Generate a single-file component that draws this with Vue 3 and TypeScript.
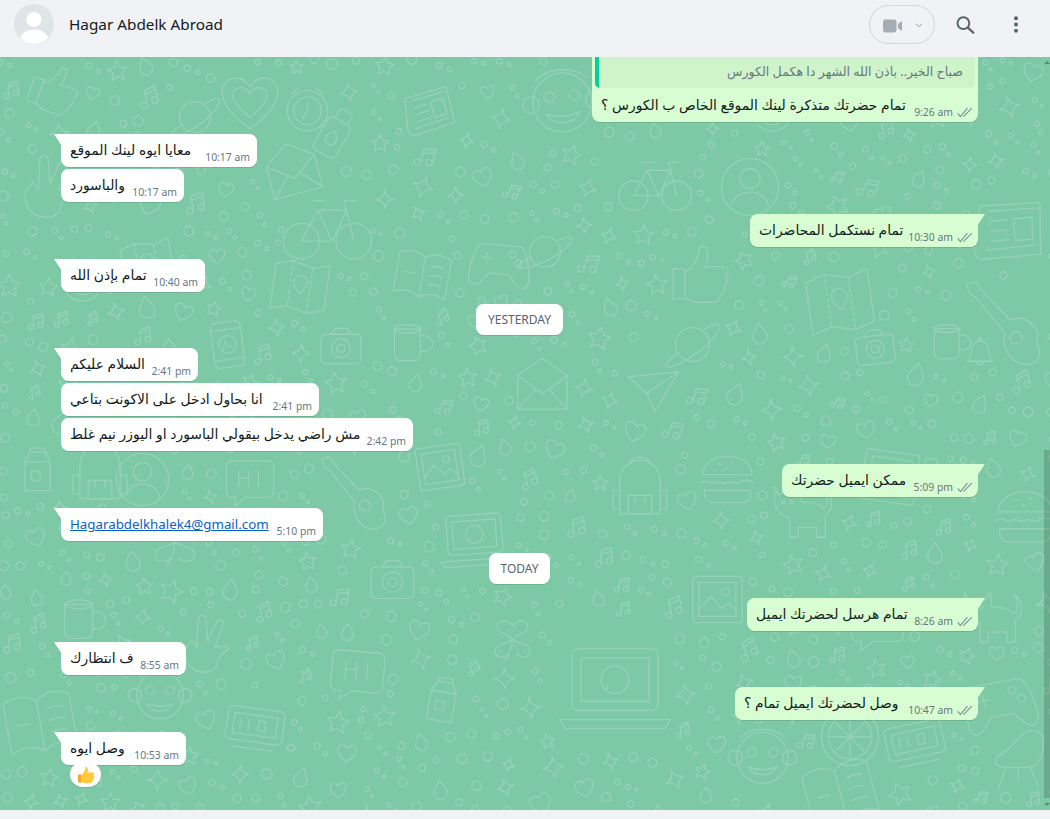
<script setup lang="ts">
interface Msg {
  kind: 'in' | 'out' | 'chip'
  text?: string
  time?: string
  gap: string
  w?: number
  tail?: boolean
  link?: boolean
  quote?: string
  react?: boolean
}

const messages: Msg[] = [
  { kind: 'out', text: 'تمام حضرتك متذكرة لينك الموقع الخاص ب الكورس ؟', time: '9:26 am', gap: 'g0', w: 386, quote: 'صباح الخير.. باذن الله الشهر دا هكمل الكورس' },
  { kind: 'in', text: 'معايا ايوه لينك الموقع', time: '10:17 am', gap: 'g12', w: 196, tail: true },
  { kind: 'in', text: 'والباسورد', time: '10:17 am', gap: 'g2', w: 123 },
  { kind: 'out', text: 'تمام نستكمل المحاضرات', time: '10:30 am', gap: 'g12', w: 228, tail: true },
  { kind: 'in', text: 'تمام بإذن الله', time: '10:40 am', gap: 'g12', w: 144, tail: true },
  { kind: 'chip', text: 'YESTERDAY', gap: 'g12' },
  { kind: 'in', text: 'السلام عليكم', time: '2:41 pm', gap: 'g13', w: 137, tail: true },
  { kind: 'in', text: 'انا بحاول ادخل على الاكونت بتاعي', time: '2:41 pm', gap: 'g2', w: 258 },
  { kind: 'in', text: 'مش راضي يدخل بيقولي الباسورد او اليوزر نيم غلط', time: '2:42 pm', gap: 'g2', w: 352 },
  { kind: 'out', text: 'ممكن ايميل حضرتك', time: '5:09 pm', gap: 'g13', w: 196, tail: true },
  { kind: 'in', text: 'Hagarabdelkhalek4@gmail.com', time: '5:10 pm', gap: 'g11', w: 262, tail: true, link: true },
  { kind: 'chip', text: 'TODAY', gap: 'g12' },
  { kind: 'out', text: 'تمام هرسل لحضرتك ايميل', time: '8:26 am', gap: 'g14', w: 231, tail: true },
  { kind: 'in', text: 'ف انتظارك', time: '8:55 am', gap: 'g11', w: 125, tail: true },
  { kind: 'out', text: 'وصل لحضرتك ايميل تمام ؟', time: '10:47 am', gap: 'g12', w: 243, tail: true },
  { kind: 'in', text: 'وصل ايوه', time: '10:53 am', gap: 'g12', w: 125, tail: true, react: true },
]

// Big background doodles: [symbol, x, y, size, rotation], in canvas coordinates (y measured from the top of the chat area)
const big: [string, number, number, number, number][] = [
  ['bike', 285, 125, 85, 0], ['monkey', 525, 10, 75, -5], ['face', 720, 100, 60, 0], ['paper', 975, 140, 70, 8],
  ['map', 805, 210, 70, -8], ['guitar', 965, 225, 80, 0], ['camera', 855, 270, 40, -6], ['mug', 930, 265, 40, 0],
  ['thumb', 670, 185, 60, 0], ['phone', 205, 265, 45, -8], ['map', 270, 200, 60, 8], ['envelope', 515, 300, 55, 0],
  ['camera', 320, 268, 42, 0], ['mug', 390, 265, 42, 0], ['planet', 665, 260, 55, 0], ['plane', 625, 305, 50, 15],
  ['backpack', 70, 385, 60, 0], ['milk', 15, 390, 45, 0], ['face', 115, 395, 55, 0], ['burger', 995, 430, 60, 0],
  ['backpack', 610, 400, 60, 0], ['laptop', 560, 580, 110, 0], ['clockbar', 885, 655, 60, -12], ['clockbar', 225, 640, 60, 8],
  ['hand', 180, 560, 55, 0], ['frame', 690, 515, 55, 0], ['chat', 850, 540, 55, 0], ['cat', 960, 525, 60, 0],
  ['pad', 965, 610, 70, -10], ['monkey', 730, 670, 65, 0], ['orange', 820, 650, 60, 0], ['book', 805, 700, 70, -15],
  ['chair', 990, 670, 60, 0], ['thumb', 30, 5, 50, 20], ['heartbig', 220, 15, 60, 0], ['clock', 285, 30, 45, 0],
  ['bottle', 310, 50, 50, 30], ['planet', 170, 35, 50, 0], ['envelope', 265, 85, 55, -15], ['hand', 20, 100, 60, 0],
  ['bell', 155, 360, 40, 0], ['chat', 225, 400, 50, 0], ['clover', 150, 460, 50, 0], ['camera', 370, 500, 45, 0],
  ['bell', 965, 280, 30, 0], ['clock', 750, 30, 45, 0], ['paper', 405, 30, 50, -5], ['pad', 470, 175, 60, 5],
  ['book', 395, 190, 55, 10], ['frame', 415, 385, 50, -8], ['planet', 520, 170, 50, 10], ['burger', 700, 395, 55, 0],
  ['laptop', 440, 450, 70, -4], ['monkey', 130, 610, 60, 0], ['book', 5, 630, 70, -10], ['chat', 330, 590, 55, 5],
  ['milk', 420, 620, 45, 10], ['clover', 490, 560, 45, 0], ['mug', 60, 540, 45, 0], ['guitar', 320, 400, 70, 0],
  ['frame', 860, 390, 60, 8], ['cat', 770, 420, 60, 0], ['bottle', 870, 10, 50, 15], ['orange', 800, 10, 40, 0],
  ['bike', 620, 90, 70, 0], ['clock', 60, 200, 45, 0], ['map', 120, 180, 55, -10],
]

let seed = 17
const rnd = (): number => {
  seed = (seed * 16807) % 2147483647
  return seed / 2147483647
}
const smallKinds = ['star', 'spark', 'heart', 'drop', 'note', 'ring', 'ring', 'ring', 'ring', 'ring', 'dots', 'dots', 'dots', 'spark']
const small: { s: string; x: number; y: number; w: number; r: number }[] = []
for (let gy = -4; gy < 753; gy += 12) {
  for (let gx = -4; gx < 1050; gx += 12) {
    const x = gx + rnd() * 8
    const y = gy + rnd() * 8
    const s = smallKinds[Math.floor(rnd() * smallKinds.length)]
    const w = s === 'ring' ? 7 + rnd() * 7 : s === 'dots' ? 12 + rnd() * 6 : 16 + rnd() * 11
    const r = Math.floor(rnd() * 50) - 25
    const hit = big.some(([, bx, by, bw]) => x + w > bx && x < bx + bw && y + w > by && y < by + bw)
    const tooClose = small.some((o) => {
      const reach = (o.w + w) / 2 + 3
      return Math.abs(o.x + o.w / 2 - x - w / 2) < reach && Math.abs(o.y + o.w / 2 - y - w / 2) < reach
    })
    if (!hit && !tooClose) {
      small.push({ s, x, y, w, r })
    }
  }
}
const doodles = [
  ...big.map(([s, x, y, w, r]) => ({ s, x: x - w * 0.06, y: y - w * 0.06, w: w * 1.12, r })),
  ...small,
]
</script>

<template>
  <div class="page">
    <header class="topbar">
      <svg class="avatar" viewBox="0 0 40 40" aria-hidden="true">
        <circle cx="20" cy="20" r="20" fill="#dfe5e7" />
        <circle cx="20" cy="15.5" r="7.6" fill="#fff" />
        <path d="M6 34c2-6 8-8.5 14-8.5S32 28 34 34a20 20 0 0 1-28 0z" fill="#fff" />
      </svg>
      <span class="name">Hagar Abdelk Abroad</span>
      <div class="actions">
        <div class="call">
          <svg width="20" height="14" viewBox="0 0 20 14" aria-hidden="true">
            <rect x="0" y="0.5" width="13.5" height="13" rx="2.4" fill="#a5acb3" />
            <path d="M15 5l4-3v10l-4-3z" fill="#a5acb3" />
          </svg>
          <svg width="8" height="5" viewBox="0 0 8 5" aria-hidden="true">
            <path d="M1.2 1l2.8 2.6L6.8 1" fill="none" stroke="#b4bbc1" stroke-width="1.1" />
          </svg>
        </div>
        <svg class="search" width="19" height="18" viewBox="0 0 19 18" aria-hidden="true">
          <circle cx="7.4" cy="7.2" r="5.9" fill="none" stroke="#54656f" stroke-width="2" />
          <path d="M11.6 11.4l6.4 5.9" fill="none" stroke="#54656f" stroke-width="2.2" />
        </svg>
        <svg class="menu" width="6" height="17" viewBox="0 0 6 17" aria-hidden="true">
          <circle cx="3" cy="2.3" r="2" fill="#54656f" />
          <circle cx="3" cy="8.5" r="2" fill="#54656f" />
          <circle cx="3" cy="14.7" r="2" fill="#54656f" />
        </svg>
      </div>
    </header>

    <main class="chat">
      <svg class="doodles" width="1050" height="753" viewBox="0 0 1050 753" aria-hidden="true">
        <defs>
          <symbol id="d-star" viewBox="0 0 40 40"><path d="M20 4l5 11 12 1.500-9 8 2.500 12L20 30.500 9.500 36.500 12 24.500l-9-8L15 15z" /></symbol>
          <symbol id="d-spark" viewBox="0 0 40 40"><path d="M20 3c1 10 5 15 16 17-11 2-15 7-16 17-1-10-5-15-16-17 11-2 15-7 16-17z" /></symbol>
          <symbol id="d-heart" viewBox="0 0 40 40"><path d="M20 35C6 25 3 18 5 12c2-6 11-8 15 0 4-8 13-6 15 0 2 6-1 13-15 23z" /></symbol>
          <symbol id="d-drop" viewBox="0 0 40 40"><path d="M20 4c8 11 12 16 12 22a12 12 0 0 1-24 0c0-6 4-11 12-22z" /></symbol>
          <symbol id="d-note" viewBox="0 0 40 40"><circle cx="11" cy="31" r="5" /><circle cx="29" cy="27" r="5" /><path d="M16 31V9l18-4v22M16 15l18-4" /></symbol>
          <symbol id="d-ring" viewBox="0 0 40 40"><circle cx="20" cy="20" r="15" /></symbol>
          <symbol id="d-dots" viewBox="0 0 40 40"><circle cx="11" cy="13" r="7" /><circle cx="30" cy="30" r="5" /></symbol>
          <symbol id="d-heartbig" viewBox="0 0 40 40"><path d="M20 36C5 25 2 17 4 11c2-6 11-8 16 0 5-8 14-6 16 0 2 6-1 14-16 25z" /><path d="M20 29C11 22 9 17 10 14c2-3 7-4 10 1 3-5 8-4 10-1 1 3-1 8-10 15z" /></symbol>
          <symbol id="d-camera" viewBox="0 0 40 40"><rect x="3" y="10" width="34" height="25" rx="4" /><path d="M12 10l3-5h10l3 5" /><circle cx="20" cy="22" r="8" /><circle cx="20" cy="22" r="3.500" /></symbol>
          <symbol id="d-envelope" viewBox="0 0 40 40"><path d="M4 14L20 3l16 11v22H4z" /><path d="M4 14l16 12 16-12M4 36l12-13M36 36L24 23" /></symbol>
          <symbol id="d-mug" viewBox="0 0 40 40"><path d="M6 8h22v22a5 5 0 0 1-5 5H11a5 5 0 0 1-5-5z" /><ellipse cx="17" cy="8" rx="11" ry="3.500" /><path d="M28 14h4a5 5 0 0 1 0 13h-4" /></symbol>
          <symbol id="d-phone" viewBox="0 0 40 40"><rect x="8" y="2" width="24" height="36" rx="4" /><path d="M8 8h24M8 32h24" /><circle cx="20" cy="20" r="7" /><path d="M16 24l1-3M18 17c0 3 2 5 5 5" /></symbol>
          <symbol id="d-map" viewBox="0 0 40 40"><path d="M4 8l10-3 12 3 10-3v27l-10 3-12-3-10 3z" /><path d="M14 5v27M26 8v27" stroke-dasharray="3 3" /><path d="M20 24c-3-3-4-5-4-7a4 4 0 0 1 8 0c0 2-1 4-4 7z" /></symbol>
          <symbol id="d-planet" viewBox="0 0 40 40"><circle cx="20" cy="20" r="11" /><path d="M11 25C4 30 2 33 3 34c2 2 13-3 22-10s14-15 12-17c-1-1-4 0-9 3" /></symbol>
          <symbol id="d-clock" viewBox="0 0 40 40"><circle cx="20" cy="21" r="16" /><circle cx="20" cy="21" r="11" /><path d="M20 14v7l-4 6M13 3l-6 5M27 3l6 5" /></symbol>
          <symbol id="d-bottle" viewBox="0 0 40 40"><rect x="11" y="11" width="18" height="27" rx="4" /><rect x="15" y="3" width="10" height="8" rx="1" /><path d="M20 19c3 4 4 5 4 7a4 4 0 0 1-8 0c0-2 1-3 4-7z" /></symbol>
          <symbol id="d-burger" viewBox="0 0 40 40"><path d="M4 17c0-8 8-12 16-12s16 4 16 12z" /><path d="M3 22c4-3 6 2 9 0s5 2 8 0 5 2 8 0 5-2 9 0M5 27h30v3a5 5 0 0 1-5 5H10a5 5 0 0 1-5-5z" /><path d="M14 10h2M22 9h2M18 13h2" /></symbol>
          <symbol id="d-backpack" viewBox="0 0 40 40"><path d="M8 16a12 12 0 0 1 24 0v20H8z" /><path d="M14 6c0-5 12-5 12 0M13 25h14v11H13zM8 22H4v11h4M32 22h4v11h-4M17 25v4M23 25v4" /></symbol>
          <symbol id="d-milk" viewBox="0 0 40 40"><path d="M10 14l4-8h12l4 8v23H10zM10 14h20M14 3h12v3H14z" /><path d="M15 21l7 1v7l-7-1z" /></symbol>
          <symbol id="d-laptop" viewBox="0 0 40 40"><rect x="6" y="6" width="28" height="20" rx="2" /><rect x="9" y="9" width="22" height="14" /><path d="M2 29h36l-2 3H4z" /><circle cx="20" cy="16" r="4.500" /><path d="M17 19.500l.7-2" /></symbol>
          <symbol id="d-bike" viewBox="0 0 40 40"><circle cx="9" cy="27" r="7.500" /><circle cx="31" cy="27" r="7.500" /><path d="M9 27l7-13h12l3 13M16 14l6 13H9M22 27l6-13M14 10h5M28 14l-1-4h5" /></symbol>
          <symbol id="d-monkey" viewBox="0 0 40 40"><circle cx="20" cy="19" r="14" /><circle cx="5" cy="19" r="4" /><circle cx="35" cy="19" r="4" /><circle cx="14" cy="16" r="2.500" /><circle cx="26" cy="16" r="2.500" /><path d="M12 24c3 6 13 6 16 0-5 2-11 2-16 0zM8 8c5-6 19-6 24 0" /></symbol>
          <symbol id="d-face" viewBox="0 0 40 40"><circle cx="20" cy="20" r="17" /><circle cx="20" cy="15" r="6" /><path d="M9 31c2-6 6-8 11-8s9 2 11 8" /></symbol>
          <symbol id="d-paper" viewBox="0 0 40 40"><path d="M3 9l30-6 4 26-30 7c-3-1-4-4-4-6z" /><path d="M8 11l24-5M9 31l24-6M21 13l9-2 2 11-9 2zM9 16l9-2M10 21l9-2M11 26l9-2" /></symbol>
          <symbol id="d-guitar" viewBox="0 0 40 40"><path d="M3 3l4-1 2 3 13 14c3-1 7-1 10 2s3 6 2 8c2 4 2 7-1 9s-8 1-11-3-3-7-2-10L7 9 4 7z" /><circle cx="25" cy="27" r="2.800" /></symbol>
          <symbol id="d-thumb" viewBox="0 0 40 40"><path d="M4 18h7v18H4zM11 20c5-2 8-8 9-15 5-1 6 5 3 12h11c4 0 3 5 1 6 2 2 1 5-1 6 1 2 0 5-2 5 0 3-2 4-4 4H18c-3 0-4-2-7-2" /></symbol>
          <symbol id="d-hand" viewBox="0 0 40 40"><path d="M12 37c-6-3-8-10-6-15l4-5 3 5 1-19c1-3 5-2 5 1l1 14 6-13c2-2 5-1 4 2l-5 15c4-2 8-1 9 1-5 2-7 5-8 10s-8 6-14 4z" /></symbol>
          <symbol id="d-frame" viewBox="0 0 40 40"><rect x="4" y="5" width="32" height="30" rx="2" /><rect x="8" y="9" width="24" height="22" /><path d="M8 26l8-8 7 8 4-4 5 5" /><circle cx="25" cy="15" r="2.500" /></symbol>
          <symbol id="d-chat" viewBox="0 0 40 40"><path d="M7 5h26a4 4 0 0 1 4 4v18a4 4 0 0 1-4 4H17l-8 6 1-6H7a4 4 0 0 1-4-4V9a4 4 0 0 1 4-4z" /><path d="M12 12v11M19 12v11M12 17h7M26 12v11" /></symbol>
          <symbol id="d-cat" viewBox="0 0 40 40"><path d="M5 8l2 5c3-2 7-2 10 0l3-5 1 9c3 0 10 0 13 4 3-1 3-7 1-11 5 4 5 12 0 15v13h-5v-6H19v6h-5V26c-5 0-11-5-9-18z" /><circle cx="10" cy="17" r="1" /><circle cx="15" cy="17" r="1" /></symbol>
          <symbol id="d-pad" viewBox="0 0 40 40"><path d="M9 10h22c4 0 7 12 7 20 0 5-5 6-8 2l-4-5H14l-4 5c-3 4-8 3-8-2 0-8 3-20 7-20z" /><path d="M9 18h6M12 15v6" /><circle cx="27" cy="15" r="2" /><circle cx="31" cy="20" r="2" /></symbol>
          <symbol id="d-orange" viewBox="0 0 40 40"><circle cx="20" cy="20" r="17" /><circle cx="20" cy="20" r="13" /><path d="M20 8v24M8 20h24M12 12l16 16M28 12L12 28" /></symbol>
          <symbol id="d-book" viewBox="0 0 40 40"><path d="M3 8c6-3 12-3 17 1 5-4 11-4 17-1v26c-6-3-12-3-17 1-5-4-11-4-17-1zM20 9v26M25 14c3-1 5-1 8 0M25 20c3-1 5-1 8 0M25 26c3-1 5-1 8 0M8 20h7" /></symbol>
          <symbol id="d-chair" viewBox="0 0 40 40"><path d="M6 20c6-3 10-8 15-13s13-3 13 4-2 15-10 15H10c-3 0-6-3-4-6zM12 26L7 39M26 26l5 12M19 26v8" /></symbol>
          <symbol id="d-clover" viewBox="0 0 40 40"><path d="M20 20c-4-5-12-5-12-10s7-7 12-1c5-6 12-4 12 1s-8 5-12 10zM20 20c-5 4-14 3-14 9s8 6 11 2M20 20c5 4 14 3 14 9s-8 6-11 2M20 20c-1 7-2 12-6 17" /></symbol>
          <symbol id="d-bell" viewBox="0 0 40 40"><path d="M5 31c4-4 5-8 5-14a10 10 0 0 1 20 0c0 6 1 10 5 14zM16 31a4 4 0 0 0 8 0" /><circle cx="20" cy="5" r="2" /></symbol>
          <symbol id="d-plane" viewBox="0 0 40 40"><path d="M3 17L37 4 28 36l-9-11zM19 25l18-21" /></symbol>
          <symbol id="d-clockbar" viewBox="0 0 40 40"><rect x="3" y="9" width="34" height="20" rx="3" /><rect x="7" y="13" width="26" height="12" /><path d="M11 16v6M16 16v6M22 16h4v6h-4zM8 33h24" /></symbol>
        </defs>
        <use
          v-for="(d, i) in doodles"
          :key="i"
          :href="'#d-' + d.s"
          :x="d.x"
          :y="d.y"
          :width="d.w"
          :height="d.w"
          :transform="`rotate(${d.r} ${d.x + d.w / 2} ${d.y + d.w / 2})`"
        />
      </svg>

      <div class="scroller">
        <template v-for="(m, i) in messages" :key="i">
          <div v-if="m.kind === 'chip'" class="chip" :class="m.gap">{{ m.text }}</div>
          <div
            v-else
            class="bubble"
            :class="[m.kind, m.gap, { tail: m.tail, hasquote: m.quote }]"
            :style="{ width: m.w + 'px' }"
          >
            <div v-if="m.quote" class="quote" dir="rtl">
              <span class="quote-text">{{ m.quote }}</span>
            </div>
            <div class="line">
              <a v-if="m.link" class="mail" href="#">{{ m.text }}</a>
              <span v-else class="text" dir="rtl">{{ m.text }}</span>
              <span class="meta">
                <span class="time">{{ m.time }}</span>
                <svg v-if="m.kind === 'out'" class="ticks" width="16" height="11" viewBox="0 0 16 11" aria-hidden="true">
                  <path d="M0.800 6.400l2.600 3.200L10.400 1.200M6.400 9.600L14.800 1.200" fill="none" stroke="#7f929c" stroke-width="1.200" />
                </svg>
              </span>
            </div>
            <div v-if="m.react" class="reaction">
              <svg width="18" height="18" viewBox="0 0 18 18" aria-hidden="true">
                <path d="M1 8.500h3.500v8H2a1 1 0 0 1-1-1z" fill="#f3a81f" />
                <path d="M4.500 8.500c2.500-1.500 3.500-4 4-7.500 2.200-.600 3 1.800 2 5.500h5c2 0 2 2.500.800 3 1.300.800 1 2.600-.200 3 .8 1 .2 2.500-.900 2.600.200 1.300-.700 1.900-2 1.900H8c-1.500 0-2-.800-3.500-.800z" fill="#ffc83d" />
              </svg>
            </div>
          </div>
        </template>
      </div>

      <div class="bar"></div>
      <span class="arrow up"></span>
      <span class="arrow down"></span>
    </main>
    <div class="foot"></div>
  </div>
</template>

<style>
html,
body {
  margin: 0;
  background: #f0f2f5;
}
</style>

<style scoped>
.page {
  width: 1050px;
  height: 819px;
  display: flex;
  flex-direction: column;
  overflow: hidden;
  font-family: "Noto Sans", "DejaVu Sans", sans-serif;
  color: #111b21;
}
.topbar {
  height: 57px;
  flex: none;
  box-sizing: border-box;
  padding: 0 31px 9px 14px;
  background: #f0f2f5;
  display: flex;
  align-items: center;
}
.avatar {
  width: 40px;
  height: 40px;
  flex: none;
}
.name {
  margin-left: 15px;
  font-size: 15.3px;
  line-height: 20px;
}
.actions {
  margin-left: auto;
  display: flex;
  align-items: center;
}
.call {
  box-sizing: border-box;
  width: 66px;
  height: 39px;
  border: 1px solid #d1d7db;
  border-radius: 20px;
  display: flex;
  align-items: center;
  padding: 3px 0 0 13px;
  gap: 12px;
}
.search {
  margin-left: 21px;
  margin-top: 1px;
}
.menu {
  margin-left: 38px;
}
.chat {
  position: relative;
  height: 753px;
  flex: none;
  overflow: hidden;
  background: #7dc9a6;
}
.doodles {
  position: absolute;
  left: 0;
  top: 0;
  fill: none;
  stroke: #95d2b8;
  stroke-width: 1.3;
  stroke-linejoin: round;
  stroke-linecap: round;
}
.doodles * {
  vector-effect: non-scaling-stroke;
}
.scroller {
  position: relative;
  display: flex;
  flex-direction: column;
  padding: 0 72px 0 61px;
}
.g0 { margin-top: 0; }
.g2 { margin-top: 2px; }
.g11 { margin-top: 11px; }
.g12 { margin-top: 12px; }
.g13 { margin-top: 13px; }
.g14 { margin-top: 14px; }
.chip {
  align-self: center;
  box-sizing: border-box;
  height: 31px;
  padding: 0 11.5px;
  line-height: 31px;
  font-size: 12px;
  color: #54656f;
  background: #fff;
  border-radius: 7.5px;
  box-shadow: 0 1px 0.5px rgba(11, 20, 26, 0.13);
}
.bubble {
  position: relative;
  box-sizing: border-box;
  border-radius: 7.5px;
  padding: 0 7px 0 9px;
  box-shadow: 0 1px 0.5px rgba(11, 20, 26, 0.13);
}
.bubble.in {
  align-self: flex-start;
  background: #fff;
}
.bubble.out {
  align-self: flex-end;
  background: #d9fdd3;
}
.bubble.tail.in {
  border-top-left-radius: 0;
}
.bubble.tail.out {
  border-top-right-radius: 0;
}
.bubble.tail::before {
  content: "";
  position: absolute;
  top: 0;
  width: 8px;
  height: 12px;
}
.bubble.tail.in::before {
  left: -7px;
  background: #fff;
  clip-path: polygon(0 0, 100% 0, 100% 100%);
}
.bubble.tail.out::before {
  right: -7px;
  background: #d9fdd3;
  clip-path: polygon(0 0, 100% 0, 0 100%);
}
.bubble.hasquote {
  border-top-left-radius: 0;
  border-top-right-radius: 0;
  padding: 0 3px 0 3px;
}
.hasquote .line {
  padding: 0 4px 0 6px;
  height: 34px;
}
.hasquote .text {
  padding-top: 7px;
}
.hasquote .meta {
  padding-top: 17px;
}
.quote {
  box-sizing: border-box;
  height: 31px;
  background: #d0f4c9;
  border-left: 4px solid #06cf9c;
  border-radius: 0 0 5px 5px;
  padding: 6px 12px 0 0;
  display: flex;
}
.quote-text {
  font-size: 12.6px;
  line-height: 18px;
  color: #667781;
}
.line {
  display: flex;
  align-items: flex-start;
  height: 33px;
}
.text,
.mail {
  font-size: 13.9px;
  line-height: 19px;
  padding-top: 6px;
  white-space: nowrap;
  color: #111b21;
}
.mail {
  color: #0b60c5;
  text-decoration: underline;
  font-size: 13.3px;
  padding-top: 7px;
  line-height: 18px;
}
.meta {
  margin-left: auto;
  padding-top: 16px;
  display: flex;
  align-items: center;
  flex: none;
  height: 15px;
  white-space: nowrap;
}
.time {
  font-size: 10.4px;
  line-height: 15px;
  color: #667781;
}
.ticks {
  margin-left: 4px;
  margin-right: -2px;
}
.reaction {
  position: absolute;
  left: 9px;
  top: 30px;
  width: 31px;
  height: 25px;
  border-radius: 13px;
  background: #fff;
  display: flex;
  align-items: center;
  justify-content: center;
  box-shadow: 0 1px 1px rgba(11, 20, 26, 0.1);
}
.bar {
  position: absolute;
  right: 0;
  top: 393px;
  width: 6px;
  height: 348px;
  background: rgba(0, 0, 0, 0.15);
}
.arrow {
  position: absolute;
  right: 0;
  width: 6px;
  height: 3px;
  background: rgba(0, 0, 0, 0.3);
  clip-path: polygon(50% 0, 100% 100%, 0 100%);
}
.arrow.up {
  top: 4px;
}
.arrow.down {
  top: 746px;
  clip-path: polygon(0 0, 100% 0, 50% 100%);
}
.foot {
  flex: 1;
  background: #f0f2f5;
}
</style>
